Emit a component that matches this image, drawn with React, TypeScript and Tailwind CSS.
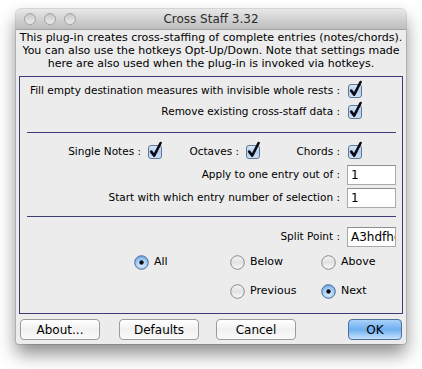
import type { ReactNode } from "react";

const font = { fontFamily: '"DejaVu Sans", "Liberation Sans", sans-serif' };

const CheckBox = () => (
  <svg width="14" height="14" viewBox="0 0 14 14" className="overflow-visible shrink-0">
    <defs>
      <linearGradient id="cbg" x1="0" y1="0" x2="0" y2="1">
        <stop offset="0" stopColor="#dbe9f8" />
        <stop offset="0.5" stopColor="#b3cfee" />
        <stop offset="1" stopColor="#cfe3f8" />
      </linearGradient>
    </defs>
    <rect x="0.5" y="0.5" width="13" height="13" rx="2.5" fill="url(#cbg)" stroke="#5f7595" />
    <path d="M3.2 6.6 L6.2 10.6 L12.6 -2" fill="none" stroke="#0b0b14" strokeWidth="2.6" strokeLinecap="round" strokeLinejoin="round" />
  </svg>
);

const Radio = ({ on }: { on?: boolean }) => (
  <svg width="15" height="15" viewBox="0 0 15 15" className="shrink-0">
    <defs>
      <radialGradient id="ron" cx="0.5" cy="0.65" r="0.6">
        <stop offset="0" stopColor="#e6f2ff" />
        <stop offset="0.6" stopColor="#a9cff5" />
        <stop offset="1" stopColor="#6ea6df" />
      </radialGradient>
      <linearGradient id="roff" x1="0" y1="0" x2="0" y2="1">
        <stop offset="0" stopColor="#f4f4f4" />
        <stop offset="0.5" stopColor="#e2e2e2" />
        <stop offset="1" stopColor="#fbfbfb" />
      </linearGradient>
    </defs>
    <circle cx="7.5" cy="7.5" r="6.8" fill={on ? "url(#ron)" : "url(#roff)"} stroke={on ? "#4d6f9c" : "#8b8b8b"} />
    {on && <circle cx="7.5" cy="7.5" r="2.2" fill="#0c0c16" />}
  </svg>
);

// the split point value is wider than its box and is clipped, as in the dialog
const Field = ({ value }: { value: string }) => (
  <div className="w-[49px] h-[20px] shrink-0 bg-white border border-[#a9a9a9] border-t-[#8f8f8f] overflow-hidden whitespace-nowrap pl-[3px] text-[12px] leading-[18px] text-black">
    {value}
  </div>
);

const Button = ({ children, w, primary }: { children: ReactNode; w: string; primary?: boolean }) => (
  <div
    className={`${w} h-[21px] rounded-[4px] border flex items-center justify-center text-[12px] text-black ${
      primary
        ? "border-[#4f6f9f] bg-gradient-to-b from-[#a9d2fb] via-[#6eafef] to-[#c5e3ff]"
        : "border-[#9b9b9b] bg-gradient-to-b from-[#ffffff] via-[#f1f1f1] to-[#fafafa]"
    }`}
  >
    {children}
  </div>
);

const Light = () => (
  <div className="w-[12px] h-[12px] rounded-full border border-[#a3a3a3] bg-gradient-to-b from-[#c9c9c9] to-[#ececec]" />
);

export default function App() {
  return (
    <div className="w-[422px] h-[369px] bg-white pt-[9px] pl-[16px]" style={font}>
      <div className="w-[390px] h-[335px] rounded-t-[5px] rounded-b-[3px] bg-[#ececec] flex flex-col overflow-hidden shadow-[0_0_0_1px_rgba(0,0,0,0.12),0_10px_18px_rgba(0,0,0,0.45)]">
        {/* title bar */}
        <div className="h-[21px] shrink-0 flex items-center bg-gradient-to-b from-[#e8e8e8] to-[#bdbdbd] border-b border-[#a2a2a2]">
          <div className="w-[70px] flex items-center gap-[8px] pl-[8px]">
            <Light />
            <Light />
            <Light />
          </div>
          <div className="flex-1 text-center text-[12px] text-[#2c2c2c]">Cross Staff 3.32</div>
          <div className="w-[70px]" />
        </div>

        {/* description */}
        <div className="pt-[1px] text-center text-[11px] leading-[13px] text-black">
          <div>This plug-in creates cross-staffing of complete entries (notes/chords).</div>
          <div>You can also use the hotkeys Opt-Up/Down. Note that settings made</div>
          <div>here are also used when the plug-in is invoked via hotkeys.</div>
        </div>

        {/* options panel */}
        <div className="mt-[6px] mx-[3px] h-[238px] border border-[#3b3b78] flex flex-col text-[10.5px] text-black">
          <div className="mt-[4px] h-[20px] flex items-center justify-end gap-[8px] pr-[40px]">
            <span>Fill empty destination measures with invisible whole rests :</span>
            <CheckBox />
          </div>
          <div className="mt-[1px] h-[20px] flex items-center justify-end gap-[8px] pr-[40px]">
            <span>Remove existing cross-staff data :</span>
            <CheckBox />
          </div>

          <div className="mt-[10px] ml-[7px] mr-[6px] h-px bg-[#3b3b78]" />

          <div className="mt-[9px] h-[20px] flex items-center justify-end pr-[40px]">
            <div className="w-[98px] flex items-center justify-end gap-[7px]">
              <span>Single Notes :</span>
              <CheckBox />
            </div>
            <div className="w-[98px] flex items-center justify-end gap-[7px]">
              <span>Octaves :</span>
              <CheckBox />
            </div>
            <div className="w-[102px] flex items-center justify-end gap-[8px]">
              <span>Chords :</span>
              <CheckBox />
            </div>
          </div>
          <div className="mt-[3px] h-[20px] flex items-center justify-end gap-[7px] pr-[6px]">
            <span>Apply to one entry out of :</span>
            <Field value="1" />
          </div>
          <div className="mt-[3px] h-[20px] flex items-center justify-end gap-[7px] pr-[6px]">
            <span>Start with which entry number of selection :</span>
            <Field value="1" />
          </div>

          <div className="mt-[8px] ml-[7px] mr-[6px] h-px bg-[#3b3b78]" />

          <div className="mt-[10px] h-[20px] flex items-center justify-end gap-[7px] pr-[6px]">
            <span>Split Point :</span>
            <Field value="A3hdfhc" />
          </div>

          <div className="mt-[5px] h-[20px] flex items-center pl-[114px] text-[11px]">
            <div className="w-[96px] flex items-center gap-[5px]">
              <Radio on />
              <span>All</span>
            </div>
            <div className="w-[91px] flex items-center gap-[5px]">
              <Radio />
              <span>Below</span>
            </div>
            <div className="flex items-center gap-[5px]">
              <Radio />
              <span>Above</span>
            </div>
          </div>
          <div className="mt-[9px] h-[20px] flex items-center pl-[210px] text-[11px]">
            <div className="w-[91px] flex items-center gap-[5px]">
              <Radio />
              <span>Previous</span>
            </div>
            <div className="flex items-center gap-[5px]">
              <Radio on />
              <span>Next</span>
            </div>
          </div>
        </div>

        {/* buttons */}
        <div className="mt-[5px] px-[4px] flex items-center">
          <Button w="w-[80px]">About...</Button>
          <div className="ml-[19px]">
            <Button w="w-[80px]">Defaults</Button>
          </div>
          <div className="ml-[17px]">
            <Button w="w-[80px]">Cancel</Button>
          </div>
          <div className="flex-1" />
          <Button w="w-[54px]" primary>
            OK
          </Button>
        </div>
      </div>
    </div>
  );
}
